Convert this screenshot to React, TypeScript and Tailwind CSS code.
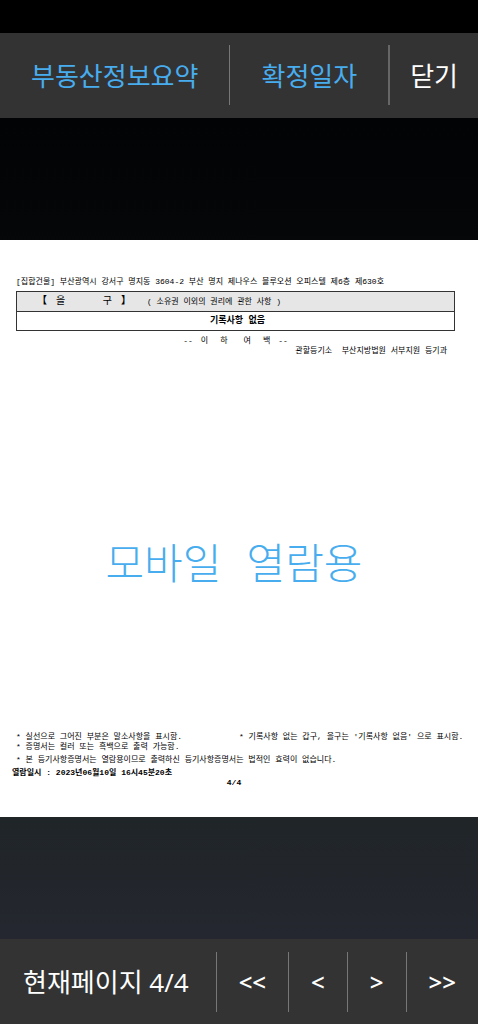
import { useState } from 'react'

const TOTAL_PAGES = 4

const barButton = 'h-[60px] leading-none whitespace-nowrap'

export default function App() {
  const [page, setPage] = useState(TOTAL_PAGES)

  const pager = [
    { label: '<<', title: '첫 페이지', target: 1 },
    { label: '<', title: '이전 페이지', target: Math.max(1, page - 1) },
    { label: '>', title: '다음 페이지', target: Math.min(TOTAL_PAGES, page + 1) },
    { label: '>>', title: '마지막 페이지', target: TOTAL_PAGES },
  ]

  return (
    <div className="min-h-screen flex flex-col bg-black font-['Noto_Sans_CJK_KR',sans-serif]">
      {/* status bar area */}
      <div className="h-[33px] shrink-0" />

      <header className="flex bg-[#333333] pt-3 pb-[13px] text-[26px] text-[#48adee]">
        <button className={`${barButton} grow px-7`}>부동산정보요약</button>
        <button className={`${barButton} border-l border-[#777777] px-[31px]`}>확정일자</button>
        <button className={`${barButton} border-l-2 border-[#666666] px-5 text-white`}>닫기</button>
      </header>

      <main className="grow flex flex-col justify-center bg-linear-to-b from-[#020304] from-0% via-[#202528] via-85% to-[#24272f] to-100%">
        <article className="bg-white pt-9 pb-[29px] text-[8px] leading-[10px] text-black font-['Liberation_Mono','Noto_Sans_CJK_KR',monospace]">
          <div className="pl-4 pr-[23px]">
            <p className="pt-px">[집합건물] 부산광역시 강서구 명지동 3604-2 부산 명지 제나우스 블루오션 오피스텔 제6층 제630호</p>
            <table className="mt-1 w-full border-collapse border border-[#333333]">
              <thead>
                <tr className="h-5 border-b border-[#333333] bg-[#e6e6e6]">
                  <th className="p-0 pl-5 text-left font-normal">
                    <div className="flex items-center">
                      <span className="flex w-[94px] justify-between text-[10px]">
                        <b>【</b>
                        <span className="flex w-14 justify-between"><span>을</span><span>구</span></span>
                        <b>】</b>
                      </span>
                      <span className="pl-4">( 소유권 이외의 권리에 관한 사항 )</span>
                    </div>
                  </th>
                </tr>
              </thead>
              <tbody>
                <tr className="h-[19px]">
                  <td className="p-0 pl-1 text-center text-[9px] font-bold">기록사항 없음</td>
                </tr>
              </tbody>
            </table>
            <p className="mt-[5px] flex justify-center gap-2">
              <span>--</span><span>이</span><span className="px-1">하</span><span className="px-1">여</span><span>백</span><span>--</span>
            </p>
            <p className="pr-2 text-right whitespace-pre">관할등기소  부산지방법원 서부지원 등기과</p>
          </div>

          <p className="mt-[184px] pr-2.5 text-center text-[42px] leading-[56px] font-light text-[#48adee]">
            모바일 열람용
          </p>

          <footer className="mt-[136px] pl-4">
            <div className="grid grid-cols-2">
              <div>
                <p>* 실선으로 그어진 부분은 말소사항을 표시함.</p>
                <p>* 증명서는 컬러 또는 흑백으로 출력 가능함.</p>
              </div>
              <p className="-ml-2 whitespace-nowrap">* 기록사항 없는 갑구, 을구는 '기록사항 없음' 으로 표시함.</p>
            </div>
            <p className="mt-[3px]">* 본 등기사항증명서는 열람용이므로 출력하신 등기사항증명서는 법적인 효력이 없습니다.</p>
            <p className="-ml-1 mt-[3px] font-bold">열람일시 : 2023년06월10일 16시45분20초</p>
            <p className="pr-[26px] text-center font-bold">
              {page}/{TOTAL_PAGES}
            </p>
          </footer>
        </article>
      </main>

      <nav className="flex bg-[#333333] pt-[13px] pb-3 text-white font-['Open_Sans','Noto_Sans_CJK_KR',sans-serif]">
        <div className={`${barButton} grow flex items-center pl-[23px] text-[26px]`}>
          현재페이지 {page}/{TOTAL_PAGES}
        </div>
        {pager.map((item) => (
          <button
            key={item.label}
            aria-label={item.title}
            onClick={() => setPage(item.target)}
            className={`${barButton} border-l border-[#777777] px-[22px] text-2xl leading-none font-semibold`}
          >
            {item.label}
          </button>
        ))}
      </nav>
    </div>
  )
}
